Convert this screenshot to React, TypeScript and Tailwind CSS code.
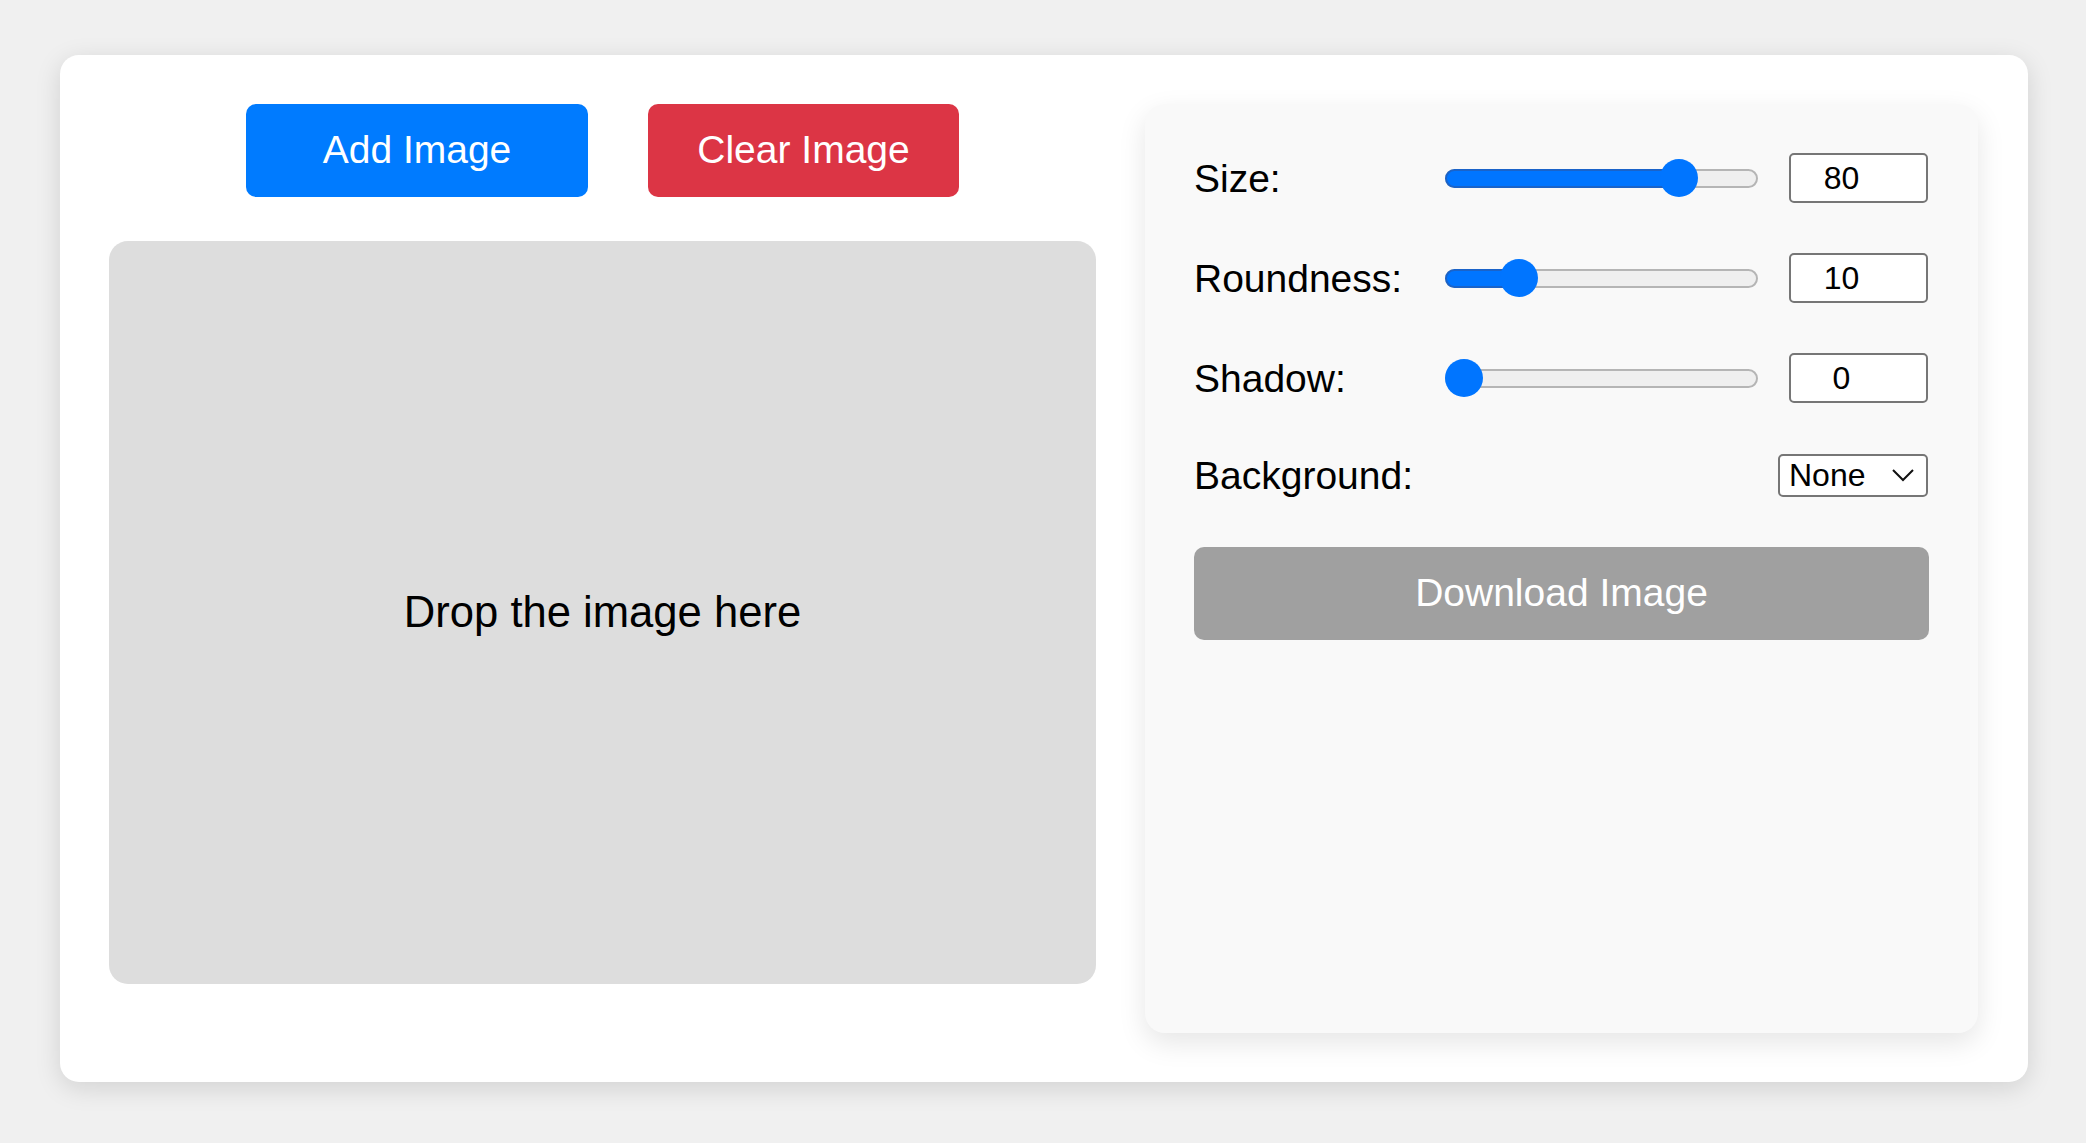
import React from "react";

const FONT = { fontFamily: '"Liberation Sans", Arial, sans-serif' };

function Slider({ frac }: { frac: number }) {
  const trackW = 313;
  const r = 19;
  const cx = r + frac * (trackW - 2 * r);
  return (
    <div className="relative w-[313px] h-[38px] shrink-0">
      <div className="absolute left-0 right-0 top-[9.5px] h-[19px] rounded-full bg-[#efefef] border-2 border-[#b5b5b5]" />
      {frac > 0 && (
        <div
          className="absolute left-0 top-[9.5px] h-[19px] rounded-full bg-[#0075ff] border-2 border-[#1a63c9]"
          style={{ width: cx + 4 }}
        />
      )}
      <div
        className="absolute top-0 h-[38px] w-[38px] rounded-full bg-[#0075ff]"
        style={{ left: cx - r }}
      />
    </div>
  );
}

function Row({ label, value, frac }: { label: string; value: string; frac: number }) {
  return (
    <div className="flex items-center h-[50px]">
      <div className="w-[251px] shrink-0 text-[39px] text-black leading-none">{label}</div>
      <Slider frac={frac} />
      <div className="ml-[31px] w-[139px] h-[50px] shrink-0 bg-white border-2 border-[#767676] rounded-[5px] flex items-center justify-center pr-[34px] text-[32px] text-black">
        {value}
      </div>
    </div>
  );
}

export default function App() {
  return (
    <div className="min-h-screen bg-[#f0f0f0] pt-[55px] pb-[40px]" style={FONT}>
      <div className="ml-[60px] w-[1968px] bg-white rounded-[19px] shadow-[0_6px_26px_rgba(0,0,0,0.13)] p-[49px] flex gap-[49px] items-start">
        {/* Left column */}
        <div className="w-[987px] shrink-0 flex flex-col">
          <div className="flex justify-center gap-[60px]">
            <button className="w-[342px] h-[93px] rounded-[10px] bg-[#007bff] text-white text-[39px] flex items-center justify-center">
              Add Image
            </button>
            <button className="w-[311px] h-[93px] rounded-[10px] bg-[#dc3545] text-white text-[39px] flex items-center justify-center">
              Clear Image
            </button>
          </div>
          <div className="mt-[44px] h-[743px] rounded-[19px] bg-[#dddddd] flex items-center justify-center text-[43.6px] text-black">
            Drop the image here
          </div>
        </div>

        {/* Right panel */}
        <div className="w-[833px] h-[929px] shrink-0 rounded-[20px] bg-[#f9f9f9] shadow-[0_10px_28px_rgba(0,0,0,0.1)] px-[49px] pt-[49px] flex flex-col gap-[50px]">
          <Row label="Size:" value="80" frac={0.78} />
          <Row label="Roundness:" value="10" frac={0.2} />
          <Row label="Shadow:" value="0" frac={0} />
          <div className="flex items-center justify-between h-[44px]">
            <div className="text-[39px] text-black leading-none">Background:</div>
            <div className="w-[150px] h-[43px] mr-[1px] bg-white border-2 border-[#767676] rounded-[5px] flex items-center pl-[9px] pr-[12px] text-[32px] text-black">
              <span className="flex-1">None</span>
              <svg width="22" height="13" viewBox="0 0 22 13" fill="none">
                <polyline points="1,1 11,11 21,1" stroke="#111" strokeWidth="2" fill="none" />
              </svg>
            </div>
          </div>
          <button className="w-[735px] h-[93px] rounded-[10px] bg-[#a0a0a0] text-white text-[39px] flex items-center justify-center">
            Download Image
          </button>
        </div>
      </div>
    </div>
  );
}
